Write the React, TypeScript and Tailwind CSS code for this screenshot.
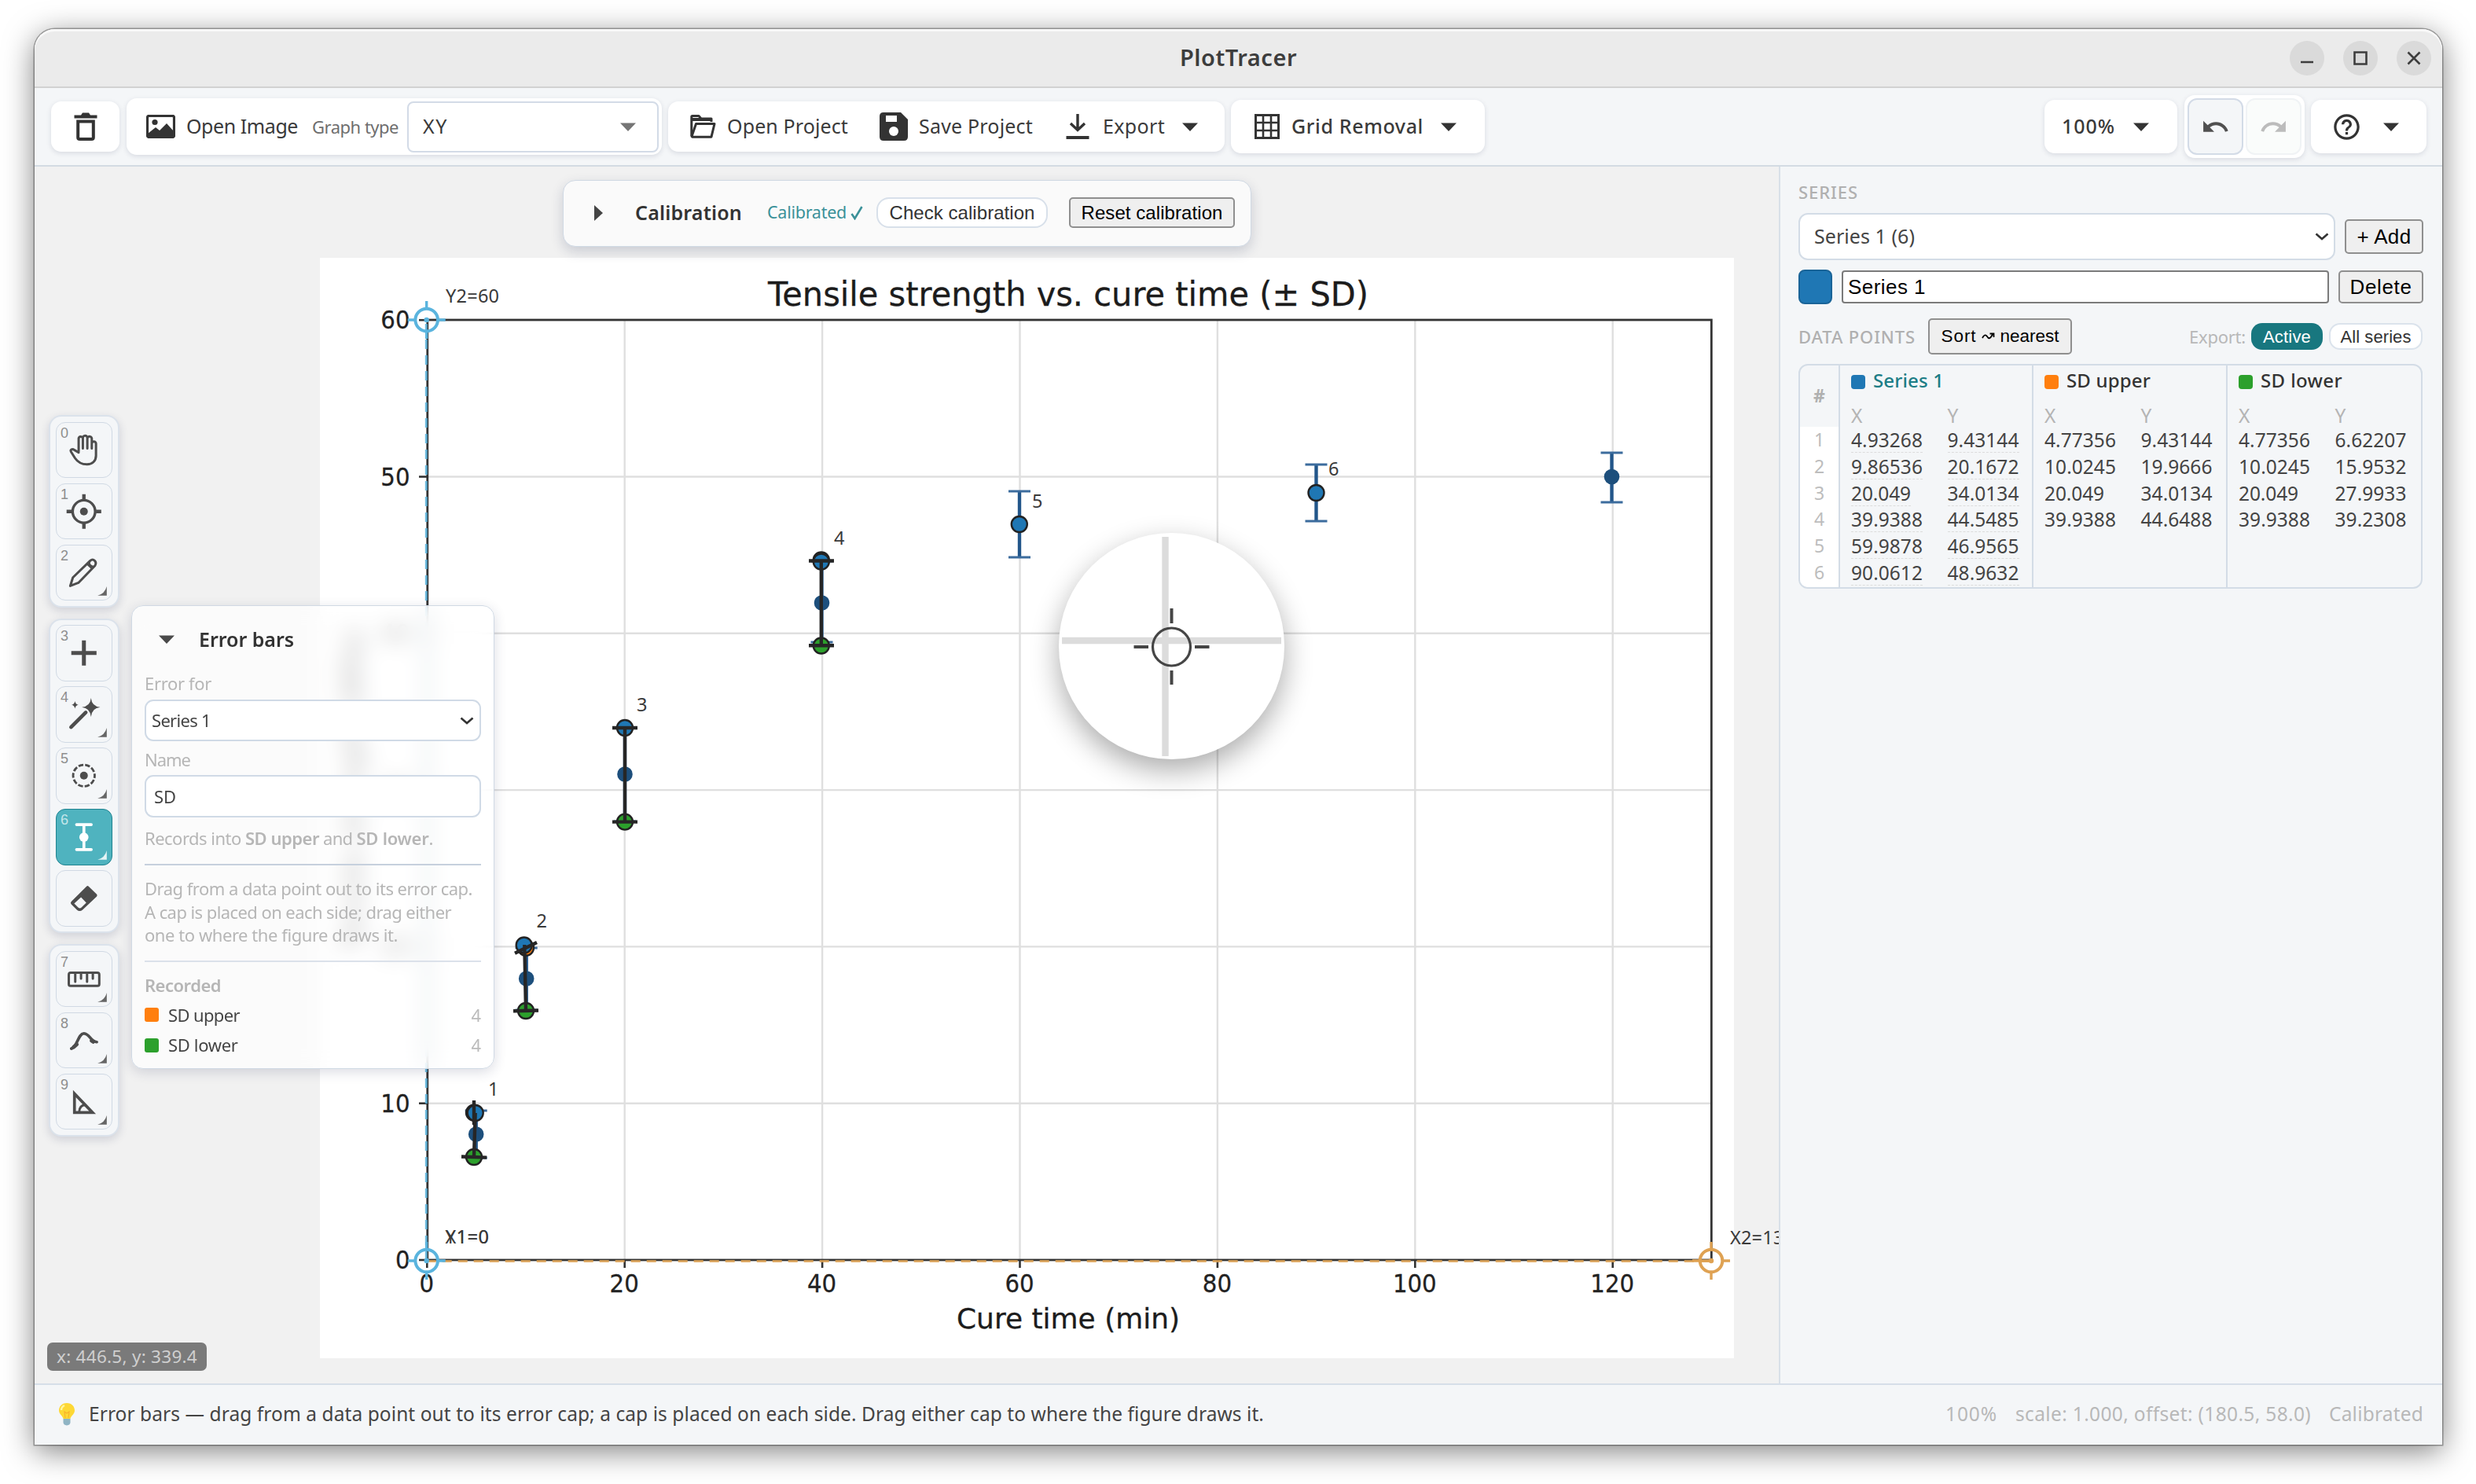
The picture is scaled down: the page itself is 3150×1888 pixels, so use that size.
import { useLayoutEffect, useRef, type ReactNode } from "react";
import { MdHelpOutline, MdRedo, MdUndo } from "react-icons/md";

/* Single-line label whose tracking is tuned so that it fills a given width. */
function T({ w, className = "", children }: { w: number; className?: string; children: ReactNode }) {
  const ref = useRef<HTMLSpanElement>(null);
  useLayoutEffect(() => {
    const el = ref.current;
    if (!el) return;
    el.style.letterSpacing = "0px";
    const n = (el.textContent || "").length;
    el.style.letterSpacing = `${(w - el.getBoundingClientRect().width) / n}px`;
  }, [w]);
  return (
    <span ref={ref} className={`inline-block shrink-0 whitespace-pre ${className}`}>
      {children}
    </span>
  );
}

function Caret({ className = "" }: { className?: string }) {
  return (
    <svg width="20" height="11" viewBox="0 0 20 11" className={`shrink-0 ${className}`}>
      <path d="M0 0.5H20L10 11Z" fill="currentColor" />
    </svg>
  );
}

function Chevron() {
  return (
    <svg width="18" height="10" viewBox="0 0 18 10" className="shrink-0" fill="none" stroke="#333" strokeWidth="2.6">
      <path d="M1.5 1.5L9 8L16.5 1.5" />
    </svg>
  );
}

function TitleBar() {
  return (
    <div className="flex h-[75px] shrink-0 items-center rounded-t-[26px] border-b-2 border-[#d2d2d2] bg-[#ebebeb] shadow-[inset_0_3px_0_#f8f8f8]">
      <div className="w-[260px]" />
      <div className="flex flex-1 justify-center">
        <T w={149} className="mb-[2px] text-[29px] font-semibold text-[#3d3d3d]">PlotTracer</T>
      </div>
      <div className="flex w-[260px] justify-end gap-6 pr-[14px]">
        {["M14 27H30", "M14.5 14.5H29.5V29.5H14.5Z", "M14.5 14.5L29.5 29.5M29.5 14.5L14.5 29.5"].map((d) => (
          <svg key={d} width="44" height="44" viewBox="0 0 44 44" className="rounded-full bg-[#dadada]">
            <path d={d} stroke="#3d3d3d" strokeWidth="2.6" fill="none" />
          </svg>
        ))}
      </div>
    </div>
  );
}

const card = "flex shrink-0 items-center rounded-[13px] bg-white shadow-[0_2px_6px_rgba(30,40,80,0.13)]";

function Toolbar() {
  return (
    <div className="flex h-[100px] shrink-0 items-center border-b-2 border-[#d3dbe3] bg-[#f4f6f8] pl-[21px] pr-[20px] text-[25px] text-[#3a3a3a]">
      <div className={`${card} h-16 w-[87px] justify-center`}>
        <svg width="30" height="36" viewBox="0 0 30 36" fill="none" stroke="#333" className="shrink-0">
          <path d="M0.5 3.5H9L11 0.5H19L21 3.5H29.5V7.5H0.5Z" fill="#333" stroke="none" />
          <path d="M5.2 11.5H24.8V32Q24.8 34 22.5 34H7.5Q5.2 34 5.2 32Z" strokeWidth="4" />
        </svg>
      </div>
      <div className={`${card} ml-[9px] h-[72px] w-[681px] pl-[25px]`}>
        <svg width="37" height="30" viewBox="0 0 37 30" className="shrink-0">
          <rect x="1.5" y="1.5" width="34" height="27" rx="2" fill="#fff" stroke="#333" strokeWidth="3.2" />
          <circle cx="11" cy="9.5" r="3.6" fill="#333" />
          <path d="M2 27V24L12 16L17 20L26 11L35 21V27Z" fill="#333" />
        </svg>
        <T w={142} className="ml-[14px]">Open Image</T>
        <T w={110} className="ml-[18px] text-[22px] text-[#6e6e6e]">Graph type</T>
        <div className="ml-[11px] flex h-[65px] w-[320px] items-center justify-between rounded-[8px] border-2 border-[#d3dbe7] pl-[18px] pr-[27px]">
          <T w={32}>XY</T>
          <Caret className="text-[#757575]" />
        </div>
      </div>
      <div className={`${card} ml-2 h-16 w-[708px] pl-[28px]`}>
        <svg width="33" height="30" viewBox="0 0 33 30" fill="none" stroke="#333" strokeWidth="3" className="shrink-0" strokeLinejoin="round">
          <path d="M1.8 27V2.5Q1.8 1.5 3 1.5H11L14 5H27V9" />
          <path d="M2 5H27V7H2Z" fill="#333" strokeWidth="2" />
          <path d="M2 27.5L7.5 11.5H31L27 28.2H3Z" />
        </svg>
        <T w={154} className="ml-[14px]">Open Project</T>
        <svg width="36" height="36" viewBox="0 0 36 36" className="ml-[40px] shrink-0">
          <path d="M5 0H27L36 9V31Q36 36 31 36H5Q0 36 0 31V5Q0 0 5 0Z" fill="#333" />
          <path d="M8 4H22V12H8Z" fill="#fff" />
          <circle cx="18" cy="24" r="6" fill="#fff" />
        </svg>
        <T w={145} className="ml-[14px]">Save Project</T>
        <svg width="30" height="32" viewBox="0 0 30 32" fill="none" stroke="#333" strokeWidth="3.4" className="ml-[42px] shrink-0">
          <path d="M15 0V19M6 12L15 20.5L24 12" />
          <path d="M0.5 30H29.5" strokeWidth="4" />
        </svg>
        <T w={79} className="ml-[17px]">Export</T>
        <Caret className="ml-[22px] text-[#333]" />
      </div>
      <div className={`${card} ml-2 h-[68px] w-[323px] pl-[30px]`}>
        <svg width="32" height="32" viewBox="0 0 32 32" fill="none" stroke="#333" className="shrink-0">
          <rect x="1.5" y="1.5" width="29" height="29" strokeWidth="3" />
          <path d="M11 2V30M21 2V30M2 11H30M2 21H30" strokeWidth="2.6" />
        </svg>
        <T w={168} className="mb-[1px] ml-[15px] font-medium">Grid Removal</T>
        <Caret className="ml-[22px] text-[#333]" />
      </div>
      <div className="flex-1" />
      <div className={`${card} h-[68px] w-[169px] pl-[22px]`}>
        <T w={68} className="mb-[1px] font-medium">100%</T>
        <Caret className="ml-[23px] text-[#333]" />
      </div>
      <div className={`${card} ml-[9px] h-[80px] w-[153px] justify-center gap-[3px]`}>
        <div className="flex h-[72px] w-[71px] items-center justify-center rounded-[12px] border-2 border-[#d3dbe7] bg-[#f4f6f8]">
          <MdUndo size={37} color="#505050" />
        </div>
        <div className="flex h-[72px] w-[71px] items-center justify-center rounded-[12px] border-2 border-[#f0f3f5] bg-[#fafcfb]">
          <MdRedo size={37} color="#bcbcbc" />
        </div>
      </div>
      <div className={`${card} ml-2 h-[68px] w-[147px] pl-[26px]`}>
        <MdHelpOutline size={39} color="#333" />
        <Caret className="ml-[27px] text-[#333]" />
      </div>
    </div>
  );
}

/* ---------- chart ---------- */

const px = (v: number) => 543.3 + v * 12.57;
const py = (v: number) => 1603 - v * 19.93;

const plotted = [
  { x: 605.7, y: 1443, t: 1413, b: 1473 },
  { x: 669.7, y: 1245, t: 1206, b: 1285 },
  { x: 795, y: 985, t: 926, b: 1045 },
  { x: 1045.5, y: 767, t: 714, b: 817 },
  { x: 1297, y: 667, t: 625, b: 709 },
  { x: 1674.5, y: 627, t: 591, b: 663 },
  { x: 2050.5, y: 606.5, t: 576, b: 639 },
];

const picks = [
  { n: "1", x: 604.7, y: 1416, lx: 621, ly: 1394 },
  { n: "2", x: 666.7, y: 1202.5, lx: 682.5, ly: 1180 },
  { n: "3", x: 795, y: 926, lx: 810, ly: 905 },
  { n: "4", x: 1044.8, y: 714.5, lx: 1061, ly: 693 },
  { n: "5", x: 1296.8, y: 667, lx: 1313, ly: 646 },
  { n: "6", x: 1674.5, y: 627, lx: 1690, ly: 605 },
];

function Marker({ x, y, c, axis }: { x: number; y: number; c: string; axis: "x" | "y" }) {
  return (
    <g stroke={c} fill="none" strokeWidth="3.4">
      <circle cx={x} cy={y} r="14.3" strokeWidth="4" />
      <circle cx={x} cy={y} r="3.2" fill={c} stroke="none" />
      <path d={`M${x} ${y - 24}V${y - 14}M${x} ${y + 14}V${y + 24}M${x - 24} ${y}H${x - 14}M${x + 14} ${y}H${x + 24}`} />
      {axis === "x" && <path d={`M${x - 14} ${y}H${x}`} />}
    </g>
  );
}

function Chart() {
  return (
    <svg width="2219" height="1548" viewBox="44 212 2219 1548" className="block" fontFamily="'DejaVu Sans', sans-serif">
      <rect x="407" y="328" width="1799" height="1400" fill="#fff" />
      <g stroke="#dfdfdf" strokeWidth="2.4">
        {[20, 40, 60, 80, 100, 120].map((v) => (
          <path key={v} d={`M${px(v)} 408V1603`} />
        ))}
        {[10, 20, 30, 40, 50].map((v) => (
          <path key={v} d={`M544 ${py(v)}H2177`} />
        ))}
      </g>
      <rect x="543.8" y="407" width="1633.500" height="1196" fill="none" stroke="#333" strokeWidth="2.8" />
      <g stroke="#333" strokeWidth="2.6">
        {[0, 20, 40, 60, 80, 100, 120].map((v) => (
          <path key={v} d={`M${px(v)} 1603V1613`} />
        ))}
        {[0, 10, 20, 30, 40, 50, 60].map((v) => (
          <path key={v} d={`M533 ${py(v)}H543`} />
        ))}
      </g>
      <g fill="#222" stroke="#222" strokeWidth="0.300" fontSize="32.500">
        {[0, 20, 40, 60, 80, 100, 120].map((v) => (
          <text key={v} x={px(v) - 0.5} y="1644" textAnchor="middle" textLength={String(v).length * 18.6} lengthAdjust="spacingAndGlyphs">{v}</text>
        ))}
        {[0, 10, 20, 30, 40, 50, 60].map((v) => (
          <text key={v} x="521.5" y={py(v) + 11} textAnchor="end" textLength={String(v).length * 18.6} lengthAdjust="spacingAndGlyphs">{v}</text>
        ))}
      </g>
      <g fill="#1c1c1c" stroke="#1c1c1c" strokeWidth="0.300">
        <text x="977" y="389" fontSize="42" textLength="764" lengthAdjust="spacingAndGlyphs">Tensile strength vs. cure time (± SD)</text>
        <text x="1217" y="1690" fontSize="36" textLength="284" lengthAdjust="spacingAndGlyphs">Cure time (min)</text>
        <text transform="translate(461 1004) rotate(-90)" fontSize="35.5" textAnchor="middle" textLength="410">Tensile strength (MPa)</text>
      </g>

      <g stroke="#22568a" fill="#1d4f7c">
        {plotted.map((p) => (
          <g key={p.x}>
            <path d={`M${p.x} ${p.t}V${p.b}`} strokeWidth="4.4" />
            <path d={`M${p.x - 14} ${p.t}H${p.x + 14}M${p.x - 14} ${p.b}H${p.x + 14}`} strokeWidth="3.2" stroke="#3c6c9d" />
            <circle cx={p.x} cy={p.y} r="9.8" stroke="none" />
          </g>
        ))}
      </g>

      <path d="M542.3 1604V407" stroke="#5ab4de" strokeWidth="3" strokeDasharray="12 8" opacity="0.85" />
      <path d="M542.7 1604.4H2177" stroke="#dfa253" strokeWidth="3" strokeDasharray="12 8" opacity="0.85" />

      <g stroke="#222" strokeWidth="2.4">
        <circle cx="603" cy="1415.6" r="10" fill="#ff7f0e" />
        <circle cx="669" cy="1205.8" r="10" fill="#ff7f0e" />
        <circle cx="1044.8" cy="712.5" r="10" fill="#ff7f0e" />
        <circle cx="603" cy="1472" r="10" fill="#2ca02c" />
        <circle cx="669" cy="1286" r="10" fill="#2ca02c" />
        <circle cx="795" cy="1045.6" r="10" fill="#2ca02c" />
        <circle cx="1044.8" cy="821.5" r="10" fill="#2ca02c" />
        {picks.map((p) => (
          <circle key={p.n} cx={p.x} cy={p.y} r="10" fill="#1f77b4" />
        ))}
      </g>
      <g stroke="#262626" strokeWidth="4.4" fill="none">
        <path d="M604.7 1416L603 1471.5M603 1400V1431M587 1471.5L619.3 1472.6" />
        <path d="M667.3 1202L669 1286M655 1212.8L683 1199M653 1286.3L685 1285.5" />
        <path d="M795 926V1045.6M779 926H811M779 1045.6H811" />
        <path d="M1044.8 713.5V821.3M1029 713.5H1061M1029 821.3H1061" />
      </g>
      <g fontFamily="'Noto Sans', sans-serif" fontSize="23.5" fill="#3a3a3a">
        {picks.map((p) => (
          <text key={p.n} x={p.lx} y={p.ly}>{p.n}</text>
        ))}
        <text x="567" y="385" textLength="68">Y2=60</text>
        <text x="566.5" y="1582" textLength="55.5">Y1=0</text>
        <text x="566.5" y="1582" textLength="55.5">X1=0</text>
        <text x="2201" y="1582.5" textLength="82">X2=130</text>
      </g>
      <Marker x={542.7} y={407} c="#5ab4de" axis="y" />
      <Marker x={542.7} y={1604} c="#5ab4de" axis="y" />
      <Marker x={2177} y={1604} c="#dfa253" axis="x" />
    </svg>
  );
}

function Lens() {
  return (
    <div className="absolute left-[1303px] top-[466px] h-[288px] w-[287px] rounded-full bg-white shadow-[0_14px_36px_rgba(0,0,0,0.33)]">
      <svg width="287" height="288" viewBox="0 0 287 288">
        <path d="M135.5 5V284M4 137H283" stroke="#dcdcdc" strokeWidth="8.4" />
        <g stroke="#454545" fill="none" strokeWidth="3.2">
          <circle cx="143.5" cy="145" r="24" />
          <path d="M143.5 96V115M143.5 175V193M95.500 145H114M173 145H191.500" strokeWidth="4" />
        </g>
      </svg>
    </div>
  );
}

/* ---------- tool palette ---------- */

const ink = "#4d4d4d";

type Tool = { key: string; corner?: boolean; active?: boolean; icon: ReactNode };

const groups: { id: string; tools: Tool[] }[] = [
  {
    id: "view",
    tools: [
      {
        key: "0",
        icon: (
          <g fill="none" stroke={ink} strokeWidth="9" strokeLinecap="round" strokeLinejoin="round">
            <path d="M87 112V65a8 8 0 0 1 16 -3V100M103 62a8 8 0 0 1 17 -3V100M120 62a8 8 0 0 1 17 3V100M137 82a8 8 0 0 1 16 0V128c0 20 -14 33 -34 33c-22 0 -36 -9 -46 -24L58 113c-4 -8 5 -13 12 -7L87 116" />
          </g>
        ),
      },
      {
        key: "1",
        icon: (
          <g fill="none" stroke={ink} strokeWidth="10">
            <circle cx="107" cy="107" r="43" />
            <circle cx="107" cy="107" r="15" fill={ink} stroke="none" />
            <path d="M107 41V61M107 153V173M41 107H61M153 107H173" strokeWidth="13" />
          </g>
        ),
      },
      {
        key: "2",
        corner: true,
        icon: (
          <g fill="none" stroke={ink} strokeWidth="9" strokeLinejoin="round">
            <path d="M55 157L65 125L131 61Q140 53 148 61Q156 69 149 80L86 145Z" />
            <path d="M119 73L138 91M128 64Q124 80 146 84" strokeWidth="7" />
          </g>
        ),
      },
    ],
  },
  {
    id: "data",
    tools: [
      { key: "3", icon: <path d="M107 59V155M59 107H155" stroke={ink} strokeWidth="15" /> },
      {
        key: "4",
        corner: true,
        icon: (
          <g fill={ink}>
            <path d="M134 45Q137 77 169 80Q137 83 134 117Q131 83 99 80Q131 77 134 45Z" />
            <path d="M73 57Q75 69 86 71Q75 73 73 85Q71 73 60 71Q71 69 73 57Z" />
            <path d="M58 156L114 100" stroke={ink} strokeWidth="14" strokeLinecap="round" />
          </g>
        ),
      },
      {
        key: "5",
        corner: true,
        icon: (
          <g fill="none" stroke={ink}>
            <circle cx="107" cy="107" r="41" strokeWidth="8.500" strokeDasharray="19 6.760" strokeDashoffset="9.500" strokeLinecap="butt" />
            <circle cx="107" cy="107" r="15" fill={ink} stroke="none" />
          </g>
        ),
      },
      {
        key: "6",
        corner: true,
        active: true,
        icon: (
          <g stroke="#fff" strokeWidth="11" strokeLinecap="round">
            <path d="M79 60H135M79 155H135M107 60V155" />
            <circle cx="107" cy="108" r="17.500" fill="#fff" stroke="none" />
          </g>
        ),
      },
      {
        key: "",
        icon: (
          <g>
            <path d="M117 62Q121 58 125 62L156 92Q159 96 156 100L102 151Q91 160 80 151L59 130Q54 125 59 120Z" fill={ink} />
            <path d="M96 103L116 124L96 144Q91 147 86 143L70 127Z" fill="#f4f6f8" />
          </g>
        ),
      },
    ],
  },
  {
    id: "measure",
    tools: [
      {
        key: "7",
        corner: true,
        icon: (
          <g fill="none" stroke={ink} strokeWidth="9">
            <rect x="49.500" y="82.500" width="116" height="50" rx="7" />
            <path d="M74 84V117M96 84V105M119 84V117M141 84V105" strokeLinecap="round" />
          </g>
        ),
      },
      {
        key: "8",
        corner: true,
        icon: (
          <g fill="none" stroke={ink} strokeWidth="11" strokeLinecap="round">
            <path d="M59 138C82 132 84 82 107 80C130 82 132 112 156 113" />
            <path d="M68 132L80 122M136 108L142 112" strokeWidth="14" />
          </g>
        ),
      },
      {
        key: "9",
        corner: true,
        icon: (
          <g fill="none" stroke={ink}>
            <path d="M71 76V148H140Z" strokeWidth="11" />
            <path d="M89 146Q90 120 112 119" strokeWidth="9" />
          </g>
        ),
      },
    ],
  },
];

function Palette() {
  return (
    <div className="absolute left-[18px] top-[316px] flex flex-col gap-[14px]">
      {groups.map((g) => (
        <div key={g.id} className="flex flex-col gap-[6.500px] rounded-[16px] border-2 border-[#dbe2eb] bg-[#f4f6f8] px-[7px] py-[6.500px] shadow-[0_4px_12px_rgba(30,40,80,0.16)]">
          {g.tools.map((t) => (
            <div
              key={t.key || "erase"}
              className={`relative h-[71.500px] w-[71.500px] rounded-[12px] border-[1.500px] ${t.active ? "border-[#1f8390] bg-[#4fb3bf]" : "border-[#d0d9e4] bg-[#f4f6f8]"}`}
            >
              <svg viewBox="0 0 214 214" className="absolute -inset-[1px] h-[71.500px] w-[71.500px]">
                {t.icon}
                {t.corner && <path d="M194 159V194H159Q186 188 194 159Z" fill={t.active ? "#e4f4f5" : "#666"} />}
              </svg>
              <span className={`absolute left-[5px] top-[3px] font-['Liberation_Sans',sans-serif] text-[18px] leading-[20px] ${t.active ? "text-[#c4e6ea]" : "text-[#8e8e8e]"}`}>{t.key}</span>
            </div>
          ))}
        </div>
      ))}
    </div>
  );
}

function ErrorPanel() {
  const recorded = [
    { name: "SD upper", w: 91, c: "bg-[#ff7f0e]" },
    { name: "SD lower", w: 88.5, c: "bg-[#2ca02c]" },
  ];
  return (
    <div className="absolute left-[123px] top-[558px] flex h-[590px] w-[462px] flex-col rounded-[15px] border-[1.500px] border-[#d0d9e4] bg-white/70 pl-4 pr-[16px] text-[22px] text-[#b6b6b6] shadow-[0_4px_16px_rgba(30,40,80,0.16)] backdrop-blur-[14px]">
      <div className="mt-[27px] flex h-8 items-center text-[#333]">
        <Caret className="ml-[18px] mb-[2px] text-[#4a4a4a]" />
        <T w={121} className="ml-[31px] text-[25px] font-semibold">Error bars</T>
      </div>
      <div className="mt-[24px] h-[30px] leading-[30px]"><T w={85}>Error for</T></div>
      <div className="mt-[6px] flex h-[53px] items-center justify-between rounded-[11px] border-2 border-[#d0dae6] bg-white pl-[7px] pr-[7px] text-[#444]">
        <T w={75}>Series 1</T>
        <Chevron />
      </div>
      <div className="mt-[8px] h-[30px] leading-[30px]"><T w={58}>Name</T></div>
      <div className="mt-[5px] flex h-[54px] items-center rounded-[11px] border-2 border-[#d0dae6] bg-white pl-[10px] text-[#444]">
        <T w={28}>SD</T>
      </div>
      <div className="mt-[11px] h-[30px] whitespace-pre leading-[30px]">
        <T w={128}>Records into </T><T w={94} className="font-semibold">SD upper</T><T w={47.5}> and </T><T w={92} className="font-semibold">SD lower</T>.
      </div>
      <div className="mt-[18px] h-[2px] shrink-0 bg-[#c6d0dd]" />
      <div className="mt-[15px] flex flex-col leading-[29.700px]">
        <T w={417} className="self-start">Drag from a data point out to its error cap.</T>
        <T w={390} className="self-start">A cap is placed on each side; drag either</T>
        <T w={322} className="self-start">one to where the figure draws it.</T>
      </div>
      <div className="mt-[17px] h-[2px] shrink-0 bg-[#dbe1ea]" />
      <div className="mt-[14px] h-[30px] leading-[30px]"><T w={97} className="font-semibold">Recorded</T></div>
      {recorded.map((r) => (
        <div key={r.name} className="mt-[8px] flex h-[30.500px] items-center text-[#444]">
          <div className={`h-[18px] w-[18px] rounded-[3px] ${r.c}`} />
          <T w={r.w} className="ml-3">{r.name}</T>
          <span className="ml-auto text-[#bbb]">4</span>
        </div>
      ))}
    </div>
  );
}

function CalibrationBar() {
  return (
    <div className="absolute left-[672px] top-[17px] flex h-[85px] w-[876px] items-center rounded-[16px] border-[1.500px] border-[#d0d9e4] bg-[#fafafa] pb-[2px] pl-[39px] shadow-[0_6px_16px_rgba(30,40,80,0.18)]">
      <svg width="11" height="20" viewBox="0 0 11 20"><path d="M0 0L11 10L0 20Z" fill="#444" /></svg>
      <T w={136} className="ml-[41px] text-[25px] font-semibold text-[#333]">Calibration</T>
      <T w={101} className="ml-[32px] text-[21.500px] text-[#3b9199]">Calibrated</T>
      <svg width="16" height="18" viewBox="0 0 16 18" className="ml-[5px]" fill="none" stroke="#3b9199" strokeWidth="2.600"><path d="M1.500 10L5.500 16L14.500 1" /></svg>
      <div className="ml-[17px] flex h-[39px] w-[218px] items-center justify-center rounded-[16px] border-2 border-[#d8e0ea] bg-white font-['Liberation_Sans',sans-serif] text-[24px] text-[#333]">
        <T w={185}>Check calibration</T>
      </div>
      <div className="ml-[27px] flex h-[39px] w-[211px] items-center justify-center rounded-[5px] border-2 border-[#8f8f8f] bg-[#efefef] font-['Liberation_Sans',sans-serif] text-[24px] text-black">
        <T w={180}>Reset calibration</T>
      </div>
    </div>
  );
}

/* ---------- side panel ---------- */

const native = "flex shrink-0 items-center justify-center rounded-[5px] border-2 border-[#8f8f8f] bg-[#efefef] font-['Liberation_Sans',sans-serif] text-black";

const columns = [
  {
    name: "Series 1", nw: 90, width: "w-[246px]", swatch: "bg-[#1f77b4]", color: "text-[#1c7d86]", editable: true,
    rows: [["4.93268", "9.43144"], ["9.86536", "20.1672"], ["20.049", "34.0134"], ["39.9388", "44.5485"], ["59.9878", "46.9565"], ["90.0612", "48.9632"]],
  },
  {
    name: "SD upper", nw: 107, width: "w-[247px]", swatch: "bg-[#ff7f0e]", color: "text-[#333]", editable: false,
    rows: [["4.77356", "9.43144"], ["10.0245", "19.9666"], ["20.049", "34.0134"], ["39.9388", "44.6488"]],
  },
  {
    name: "SD lower", nw: 104, width: "w-[249px]", swatch: "bg-[#2ca02c]", color: "text-[#333]", editable: false,
    rows: [["4.77356", "6.62207"], ["10.0245", "15.9532"], ["20.049", "27.9933"], ["39.9388", "39.2308"]],
  },
];

function DataTable() {
  return (
    <div className="mt-[12px] flex h-[286px] w-[794px] overflow-hidden rounded-[12px] border-2 border-[#d3dce6] text-[24.500px] text-[#444]">
      <div className="flex w-[49px] shrink-0 flex-col text-center text-[23px] text-[#bdbdbd]">
        <div className="flex h-[78px] items-center justify-center pb-[2px] font-bold text-[#b0b0b0]">#</div>
        <div className="flex flex-1 flex-col bg-white">
          {[1, 2, 3, 4, 5, 6].map((n) => (
            <div key={n} className="h-[33.800px] leading-[32px]">{n}</div>
          ))}
        </div>
      </div>
      {columns.map((c) => (
        <div key={c.name} className={`${c.width} shrink-0 border-l-2 border-[#d3dce6] pl-[14px]`}>
          <div className="mt-[2px] flex h-[34px] items-center">
            <div className={`mt-[3px] h-[18px] w-[18px] rounded-[4px] ${c.swatch}`} />
            <T w={c.nw} className={`ml-[10px] text-[24px] font-medium ${c.color}`}>{c.name}</T>
          </div>
          <div className="mt-[15px] flex h-[26px] items-center text-[#b4b4b4]">
            <span className="w-[122.500px] shrink-0">X</span>
            <span>Y</span>
          </div>
          {c.rows.map((r) => (
            <div key={r[0] + r[1]} className="flex h-[33.800px]">
              {r.map((v, i) => (
                <span key={i} className="w-[122.500px] shrink-0">
                  <T w={v.length === 7 ? 91 : 76} className={`h-[33px] border-b-[1.500px] border-dashed leading-[33px] ${c.editable ? "border-[#dcdcdc]" : "border-transparent"}`}>{v}</T>
                </span>
              ))}
            </div>
          ))}
        </div>
      ))}
    </div>
  );
}

function SidePanel() {
  return (
    <div className="flex flex-1 flex-col border-l-2 border-[#d8e0e8] bg-[#f4f6f8] pl-[23px] pt-[18px] text-[22px] text-[#333]">
      <div className="h-[29px] font-medium leading-[29px] text-[#b0b0b0]"><T w={76}>SERIES</T></div>
      <div className="mt-[12px] flex items-center">
        <div className="flex h-[60px] w-[683px] items-center justify-between rounded-[12px] border-2 border-[#d3dce6] bg-white pl-[18px] pr-[6px]">
          <T w={128} className="mb-[1px] text-[25px] text-[#444]">Series 1 (6)</T>
          <Chevron />
        </div>
        <div className={`${native} ml-[12px] h-[44px] w-[100px] text-[26px]`}><T w={69}>+ Add</T></div>
      </div>
      <div className="mt-[12px] flex h-[44px] items-center">
        <div className="h-[44px] w-[43px] rounded-[8px] border-2 border-[#1a6498] bg-[#1f77b4]" />
        <div className="ml-[12px] flex h-[42px] w-[620px] items-center rounded-[4px] border-2 border-[#7b7b7b] bg-white pl-[6px] font-['Liberation_Sans',sans-serif] text-[26px] text-black">
          <T w={99}>Series 1</T>
        </div>
        <div className={`${native} ml-[12px] h-[42px] w-[108px] text-[26px]`}><T w={79}>Delete</T></div>
      </div>
      <div className="mt-[18px] flex h-[46px] items-center">
        <T w={149} className="font-medium text-[#b0b0b0]">DATA POINTS</T>
        <div className={`${native} ml-[16px] h-[46px] w-[183px] text-[22.500px]`}>
          <T w={45}>Sort</T>
          <svg width="18" height="12" viewBox="0 0 18 12" fill="none" stroke="#000" strokeWidth="1.800" className="mx-[6px]">
            <path d="M1 8Q4 2 7 6Q10 11 13 5L15 2M10.500 2.500H15.500V7" />
          </svg>
          <T w={75}>nearest</T>
        </div>
        <T w={72} className="ml-[149px] text-[#b8b8b8]">Export:</T>
        <div className="ml-[7px] flex h-[34px] w-[91px] shrink-0 items-center justify-center rounded-[14px] bg-[#18777f] font-['Liberation_Sans',sans-serif] text-[22px] text-white"><T w={61}>Active</T></div>
        <div className="ml-[8px] flex h-[34px] w-[119px] shrink-0 items-center justify-center rounded-[14px] border-2 border-[#dbe3ec] bg-white font-['Liberation_Sans',sans-serif] text-[22px] text-[#333]"><T w={90}>All series</T></div>
      </div>
      <DataTable />
    </div>
  );
}

function StatusBar() {
  return (
    <div className="flex h-[78px] shrink-0 items-center border-t-2 border-[#d6dee8] bg-[#f4f6f8] pb-[2px] pl-[28px] pr-[24px] text-[24.500px] text-[#444]">
      <svg width="26" height="30" viewBox="0 0 26 30" className="shrink-0">
        <path d="M13 1C6.500 1 3 5.500 3 10.500C3 15 7.500 17 8.500 21H17.500C18.500 17 23 15 23 10.500C23 5.500 19.500 1 13 1Z" fill="#fdd835" />
        <path d="M10 4Q6 6 6 10" stroke="#fff59d" strokeWidth="2.500" fill="none" />
        <path d="M11 20L10 12L13 14L16 12L15 20" stroke="#f9b22a" strokeWidth="1.200" fill="none" />
        <path d="M8.500 21H17.500V26Q17 29 13 29.500Q9 29 8.500 26Z" fill="#8fb4c4" />
      </svg>
      <T w={1495} className="ml-[15px]">Error bars — drag from a data point out to its error cap; a cap is placed on each side. Drag either cap to where the figure draws it.</T>
      <div className="ml-auto flex gap-[23px] text-[#b8b8b8]">
        <T w={66}>100%</T>
        <T w={376}>scale: 1.000, offset: (180.5, 58.0)</T>
        <T w={120}>Calibrated</T>
      </div>
    </div>
  );
}

export default function App() {
  return (
    <div className="h-[1888px] w-[3150px] overflow-hidden bg-white pl-[44px] pt-[37px] font-['Noto_Sans',sans-serif]">
      <div className="flex h-[1801px] w-[3063px] flex-col rounded-t-[26px] shadow-[0_0_0_1.500px_rgba(0,0,0,0.32),0_8px_38px_rgba(0,0,0,0.5)]">
        <TitleBar />
        <Toolbar />
        <div className="flex h-[1548px] shrink-0">
          <div className="relative w-[2219px] shrink-0 overflow-hidden bg-[#f1f1f1]">
            <Chart />
            <Lens />
            <CalibrationBar />
            <Palette />
            <ErrorPanel />
            <div className="absolute left-[16px] top-[1496px] flex h-[36px] w-[203px] items-center justify-center rounded-[7px] bg-[#7a7a7a] text-[22.500px] text-[#cfcfcf]">
              <T w={179}>x: 446.5, y: 339.4</T>
            </div>
          </div>
          <SidePanel />
        </div>
        <StatusBar />
      </div>
    </div>
  );
}
